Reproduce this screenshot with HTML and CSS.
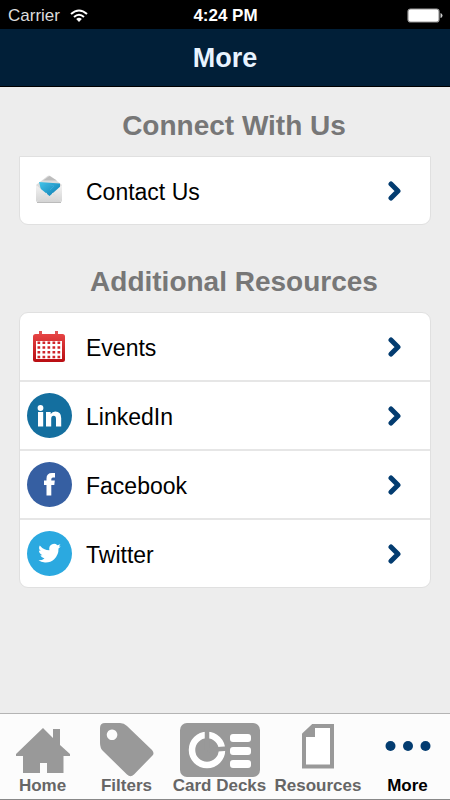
FILE: index.html
```html
<!DOCTYPE html>
<html lang="en">
<head>
<meta charset="utf-8">
<meta name="viewport" content="width=device-width, initial-scale=1">
<title>More</title>
<link rel="stylesheet" href="styles.css">
</head>
<body>
<div class="status">
  <div class="carrier">
    <span>Carrier</span>
    <svg width="18" height="14" viewBox="0 0 18 14" fill="none" stroke="#fff" stroke-width="2">
      <path d="M1 5Q9-2 17 5M4 8Q9 3.5 14 8"/>
      <path d="M6.2 10Q9 7.5 11.8 10L9 13z" fill="#fff" stroke="none"/>
    </svg>
  </div>
  <span class="time">4:24 PM</span>
  <svg class="battery" width="36" height="15" viewBox="0 0 36 15">
    <rect x="1" y="1" width="31" height="13" rx="2.5" fill="#fff" stroke="#999" stroke-width="1.2"/>
    <path d="M33.5 5q2 .5 2 2.500t-2 2.500z" fill="#ccc"/>
  </svg>
</div>
<header class="header"><h1>More</h1></header>
<main class="content">
  <section class="group">
    <h2>Connect With Us</h2>
    <ul class="card card-flat">
      <li><a class="row" href="#contact">
        <svg class="icon" viewBox="0 0 45 45">
          <defs>
            <linearGradient id="paper" x1="0" y1="0" x2="0" y2="1"><stop offset="0" stop-color="#f3f3f3"/><stop offset="1" stop-color="#d4d4d4"/></linearGradient>
            <linearGradient id="letter" x1="0" y1="0" x2="1" y2="1"><stop offset="0" stop-color="#45c5ea"/><stop offset="1" stop-color="#0877ae"/></linearGradient>
          </defs>
          <path d="M9 17L20.500 8q1.500-1 3 0L35 17v16H9z" fill="#dcdcdc"/>
          <path d="M16 12.500l6.500-4.500L30 12.500z" fill="#bdbdbd"/>
          <path d="M12 14l21 1.500v7L23 29.500 14 22z" fill="url(#letter)"/>
          <path d="M18 18q4-3 9 0l-4 4" fill="none" stroke="#3aa9d8"/>
          <path d="M9 17l13.500 11L35 17v15q0 2-2 2H11q-2 0-2-2z" fill="url(#paper)"/>
          <path d="M9.500 33.500L20 25M34.500 33.500L25 25" stroke="#ddd" fill="none"/>
          <path d="M10 34.500h24" stroke="#bbb"/>
        </svg>
        <span>Contact Us</span>
        <svg class="chevron" viewBox="0 0 14 20"><path d="M3 3l7 7-7 7"/></svg>
      </a></li>
    </ul>
  </section>
  <section class="group">
    <h2>Additional Resources</h2>
    <ul class="card">
      <li><a class="row" href="#events">
        <svg class="icon" viewBox="0 0 45 45">
          <defs><linearGradient id="red" x1="0" y1="0" x2="0" y2="1"><stop offset="0" stop-color="#e64444"/><stop offset="1" stop-color="#b90d12"/></linearGradient></defs>
          <path d="M12 7h3v5h-3zM28 7h3v5h-3z" fill="#e05353"/>
          <rect x="6" y="10" width="32" height="28" rx="2.500" fill="url(#red)"/>
          <path d="M9 17h26v18H9z" fill="#fff"/>
          <path d="M10.500 18.800h24M10.500 23.500h24M10.500 28.200h24M10.500 33h24" stroke="#cf252a" stroke-width="2.600" stroke-dasharray="2.700 2.300"/>
        </svg>
        <span>Events</span>
        <svg class="chevron" viewBox="0 0 14 20"><path d="M3 3l7 7-7 7"/></svg>
      </a></li>
      <li><a class="row" href="#linkedin">
        <svg class="icon" viewBox="0 0 45 45">
          <circle cx="22.500" cy="22.500" r="22.500" fill="#146f9f"/>
          <circle cx="13.500" cy="15" r="2.900" fill="#fff"/>
          <path d="M11 19h5.200v14.500H11zM19 19h4.700v2q1.500-2.500 4.600-2.500 5.900 0 5.900 6.700v8.300h-5.200v-7.500q0-3.200-2.300-3.200-2.500 0-2.500 3.200v7.500H19z" fill="#fff"/>
        </svg>
        <span>LinkedIn</span>
        <svg class="chevron" viewBox="0 0 14 20"><path d="M3 3l7 7-7 7"/></svg>
      </a></li>
      <li><a class="row" href="#facebook">
        <svg class="icon" viewBox="0 0 45 45">
          <circle cx="22.500" cy="22.500" r="22.500" fill="#365fa2"/>
          <path d="M19.500 33.500V23H17v-4.500h2.500V16.500q0-5.500 5.500-5.500h3v4.500h-2q-1.700 0-1.700 1.700v1.300h3.500L27.300 23h-3v10.500z" fill="#fff"/>
        </svg>
        <span>Facebook</span>
        <svg class="chevron" viewBox="0 0 14 20"><path d="M3 3l7 7-7 7"/></svg>
      </a></li>
      <li><a class="row" href="#twitter">
        <svg class="icon" viewBox="0 0 45 45">
          <circle cx="22.500" cy="22.500" r="22.500" fill="#2ba9e0"/>
          <path d="M12.800 14.500q3.700 4.600 9.600 4.800-.9-4.500 2.700-6.100 2.900-1.200 5.300 1l3-1-1.500 2.300 1.800-.1-2.200 2.200q.2 6.400-4.300 10.600-3.900 3.500-9.200 3.200-4-.2-6.500-2.100 3.600.1 6-1.900-3-.4-4.100-3.200h2q-3.300-1.200-3.500-4.600l2 .5q-3-2.300-1.100-5.600z" fill="#fff"/>
        </svg>
        <span>Twitter</span>
        <svg class="chevron" viewBox="0 0 14 20"><path d="M3 3l7 7-7 7"/></svg>
      </a></li>
    </ul>
  </section>
</main>
<nav class="tabs">
  <a class="tab" href="#home">
    <svg width="54" height="54" viewBox="0 0 54 54"><path fill="#999" d="M27 5L37 15V6h7v16l10 9v2h-6.500v17H31V40h-7v10H7V33H0v-2z"/></svg>
    <span>Home</span>
  </a>
  <a class="tab" href="#filters">
    <svg width="54" height="54" viewBox="0 0 54 54"><path fill="#999" fill-rule="evenodd" d="M5 0H20Q24 0 27 3L52 27Q55 30.500 52 33L34 51.500Q30.500 55 27 51.500L3 28Q0 25 0 20V5Q0 0 5 0zM12 6.500a5.300 5.300 0 1 0 .1 0z"/></svg>
    <span>Filters</span>
  </a>
  <a class="tab" href="#decks">
    <svg width="80" height="54" viewBox="0 0 80 54">
      <rect width="80" height="54" rx="7" fill="#999"/>
      <circle cx="27" cy="27" r="15" fill="none" stroke="#fff" stroke-width="6.500"/>
      <path d="M27 27V6M27 27l21-1.500" stroke="#999" stroke-width="4.500"/>
      <g fill="#fff"><rect x="50" y="11" width="21" height="8" rx="3"/><rect x="50" y="24" width="21" height="8" rx="3"/><rect x="50" y="37" width="21" height="8" rx="3"/></g>
    </svg>
    <span>Card Decks</span>
  </a>
  <a class="tab" href="#resources">
    <svg width="32" height="54" viewBox="0 0 32 54"><path d="M2 11.500L11 3h19v40.500H2z" fill="#fff" stroke="#999" stroke-width="4"/><path d="M1 11L10 2h3v12H1z" fill="#999"/></svg>
    <span>Resources</span>
  </a>
  <a class="tab active" href="#more" aria-current="page">
    <svg width="46" height="54" viewBox="0 0 46 54" fill="#033c70"><circle cx="5.500" cy="23" r="5"/><circle cx="23" cy="23" r="5"/><circle cx="40.500" cy="23" r="5"/></svg>
    <span>More</span>
  </a>
</nav>
</body>
</html>
```
FILE: styles.css
```css
* {
  box-sizing: border-box;
}

body {
  margin: 0;
  min-height: 100vh;
  display: flex;
  flex-direction: column;
  background: #ededed;
  font-family: "Liberation Sans", Arial, sans-serif;
  color: #000;
}

a {
  color: inherit;
  text-decoration: none;
}

svg {
  display: block;
  flex: none;
}

.status {
  display: grid;
  grid-template-columns: 1fr auto 1fr;
  align-items: center;
  height: 29px;
  padding: 2px 7px 0 8px;
  background: #000;
  color: #fff;
  font-size: 17px;
}

.carrier {
  display: flex;
  align-items: center;
  gap: 10px;
  color: #ddd;
}

.time {
  font-weight: bold;
}

.battery {
  justify-self: end;
}

.header {
  height: 58px;
  background: #011f38;
  border-bottom: 1px solid #000;
  color: #e8f3ff;
  text-align: center;
}

h1 {
  margin: 0;
  font-size: 27px;
  line-height: 58px;
}

.content {
  flex: 1;
  padding: 17px 19px;
}

.group {
  margin-bottom: 35px;
}

h2 {
  margin: 0;
  padding: 6px 0 14px 18px;
  font-size: 28px;
  line-height: 32px;
  color: #777;
  text-align: center;
  white-space: nowrap;
}

.card {
  margin: 0;
  padding: 0;
  list-style: none;
  background: #fff;
  border: 1px solid #e0e0e0;
  border-radius: 9px;
}

.card-flat {
  border-radius: 0 0 9px 9px;
}

.card li + li {
  border-top: 2px solid #e6e6e6;
}

.row {
  display: flex;
  align-items: center;
  gap: 14px;
  height: 67px;
  padding: 0 28px 0 7px;
  font-size: 23px;
}

.row span {
  flex: 1;
  padding-top: 4px;
}

.icon {
  width: 45px;
  height: 45px;
}

.chevron {
  width: 14px;
  height: 20px;
  fill: none;
  stroke: #033c70;
  stroke-width: 5;
  stroke-linecap: round;
  stroke-linejoin: round;
}

.tabs {
  display: grid;
  grid-template-columns: 85fr 83fr 103fr 94fr 85fr;
  padding-top: 9px;
  height: 87px;
  background: #fcfcfc;
  border-top: 1px solid #b4b4b4;
  border-bottom: 1px solid #888;
}

.tab {
  display: flex;
  flex-direction: column;
  align-items: center;
  min-width: 0;
  font-size: 17px;
  font-weight: bold;
  line-height: 18px;
  color: #666;
  white-space: nowrap;
}

.active {
  color: #000;
}
```
